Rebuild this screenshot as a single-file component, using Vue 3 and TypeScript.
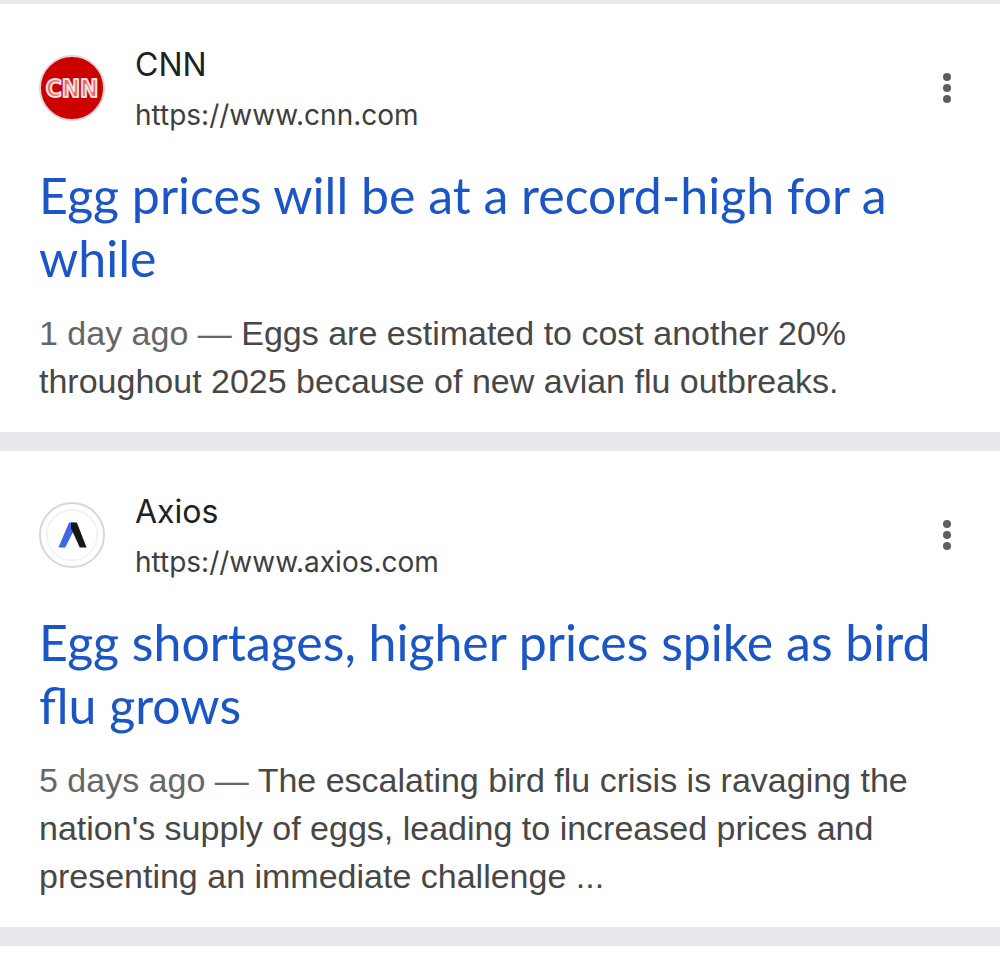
<script setup lang="ts">
interface Result {
  id: string
  source: string
  url: string
  title: string
  age: string
  snippet: string
}

const results: Result[] = [
  {
    id: 'cnn',
    source: 'CNN',
    url: 'https://www.cnn.com',
    title: 'Egg prices will be at a record-high for a while',
    age: '1 day ago',
    snippet: 'Eggs are estimated to cost another 20% throughout 2025 because of new avian flu outbreaks.',
  },
  {
    id: 'axios',
    source: 'Axios',
    url: 'https://www.axios.com',
    title: 'Egg shortages, higher prices spike as bird flu grows',
    age: '5 days ago',
    snippet: "The escalating bird flu crisis is ravaging the nation's supply of eggs, leading to increased prices and presenting an immediate challenge ...",
  },
]
</script>

<template>
  <main class="results">
    <article v-for="item in results" :key="item.id" class="card">
      <header class="head">
        <svg v-if="item.id === 'cnn'" class="logo" viewBox="0 0 68 68" aria-hidden="true">
          <circle cx="34" cy="34" r="33" fill="#cc0000" stroke="#e8d4d4" stroke-width="2" />
          <text class="cnn" x="34" y="43" text-anchor="middle">CNN</text>
        </svg>
        <svg v-else class="logo" viewBox="0 0 68 68" aria-hidden="true">
          <circle cx="34" cy="34" r="33" fill="#fff" stroke="#d6d7d9" stroke-width="2" />
          <circle cx="34" cy="34" r="26" fill="none" stroke="#f3f3f4" stroke-width="2" />
          <path d="M31 21h5l1 6-10 20h-7z" fill="#3c68e8" />
          <path d="M33 21h6l10 26h-7l-9-20z" fill="#17181a" />
        </svg>
        <div class="site">
          <div class="source">{{ item.source }}</div>
          <div class="url">{{ item.url }}</div>
        </div>
        <button class="more" type="button" :aria-label="`More about ${item.source}`">
          <svg viewBox="0 0 8 30" aria-hidden="true">
            <circle cx="4" cy="4" r="4" />
            <circle cx="4" cy="15" r="4" />
            <circle cx="4" cy="26" r="4" />
          </svg>
        </button>
      </header>
      <h3 class="title"><a :href="item.url">{{ item.title }}</a></h3>
      <p class="snippet"><span class="age">{{ item.age }} — </span><span>{{ item.snippet }}</span></p>
    </article>
  </main>
</template>

<style>
body {
  margin: 0;
  background: #fff;
}
</style>

<style scoped>
.results {
  display: flex;
  flex-direction: column;
  gap: 19px;
  padding: 4px 0 19px;
  background: #e8e9ed;
}
.card {
  padding: 32px 39px 27px;
  background: #fff;
}
.head {
  display: flex;
  align-items: center;
}
.logo {
  flex: none;
  width: 66px;
  height: 66px;
}
.cnn {
  font: bold 25px "DejaVu Sans Condensed", "DejaVu Sans", sans-serif;
  fill: #e26a6a;
  stroke: #fae0e0;
  stroke-width: 2px;
  stroke-linejoin: round;
}
.site {
  flex: 1;
  min-width: 0;
  margin-left: 30px;
  padding-top: 4px;
  font-family: Inter, "Liberation Sans", sans-serif;
}
.source {
  font-size: 32px;
  line-height: 50px;
  color: #202124;
}
.url {
  font-size: 28px;
  line-height: 50px;
  color: #3c3e42;
}
.more {
  display: flex;
  justify-content: center;
  width: 28px;
  padding: 8px 0;
  border: 0;
  background: none;
  cursor: pointer;
}
.more svg {
  width: 8px;
  height: 30px;
  fill: #5e5e5e;
}
.title {
  margin: 24px 0 19px;
  font-family: Lato, "Open Sans", sans-serif;
  font-size: 50px;
  font-weight: 400;
  line-height: 63px;
}
.title a {
  color: #1a56c8;
  text-decoration: none;
}
.snippet {
  margin: 0;
  font-family: "Liberation Sans", Arial, sans-serif;
  font-size: 34px;
  line-height: 48px;
  color: #474747;
}
.age {
  color: #666;
}
</style>
